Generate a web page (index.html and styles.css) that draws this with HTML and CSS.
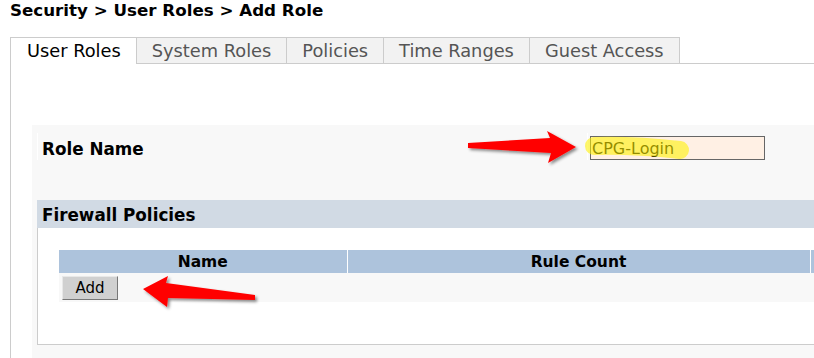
FILE: index.html
```html
<!DOCTYPE html>
<html lang="en">
<head>
    <meta charset="UTF-8">
    <title>Security - Add Role</title>
    <link rel="stylesheet" href="styles.css">
</head>
<body>
    <h1 class="crumb">Security &gt; User Roles &gt; Add Role</h1>

    <div class="tabs">
        <div class="tab active">User Roles</div>
        <div class="tab">System Roles</div>
        <div class="tab">Policies</div>
        <div class="tab">Time Ranges</div>
        <div class="tab">Guest Access</div>
        <div class="tab-fill"></div>
    </div>

    <div class="tab-panel">
        <div class="form">
            <div class="role-row">
                <div class="label-cell">Role Name</div>
                <div class="input-cell">
                    <input type="text" class="role-input" value="CPG-Login">
                </div>
            </div>

            <div class="section">
                <div class="section-head">Firewall Policies</div>
                <div class="section-body">
                    <table class="policies">
                        <thead>
                            <tr>
                                <th class="col-name">Name</th>
                                <th class="col-count">Rule Count</th>
                                <th></th>
                            </tr>
                        </thead>
                        <tbody>
                            <tr>
                                <td colspan="3"><button class="btn-add">Add</button></td>
                            </tr>
                        </tbody>
                    </table>
                </div>
            </div>
        </div>
    </div>

    <!-- annotations drawn over the screenshot -->
    <svg class="marks" width="814" height="358" viewBox="0 0 814 358">
        <defs>
            <filter id="shadow" x="-20%" y="-50%" width="140%" height="200%">
                <feDropShadow dx="2" dy="2" stdDeviation="1.5" flood-color="#000" flood-opacity="0.45"/>
            </filter>
        </defs>
        <path d="M594 146 Q635 145 680 150" stroke="#fff200" stroke-opacity="0.58" stroke-width="18" stroke-linecap="round" fill="none"/>
        <polygon filter="url(#shadow)" fill="#ff0000"
                 points="468,143 550,138 547,131 576,147 548,163 551,153 468,148"/>
        <polygon filter="url(#shadow)" fill="#ff0000"
                 points="143,289 168,276 166,283 255,295 255,300 168,298 167,307"/>
    </svg>
</body>
</html>
```

FILE: styles.css
```css
* {
    margin: 0;
    padding: 0;
    box-sizing: border-box;
}

html, body {
    overflow: hidden;
}

body {
    width: 814px;
    height: 358px;
    background: #fff;
    font-family: "DejaVu Sans", Verdana, sans-serif;
    color: #000;
    position: relative;
}

.crumb {
    font-size: 16.7px;
    font-weight: bold;
    padding: 1px 0 0 10px;
    height: 37px;
    line-height: 19px;
}

.tabs {
    display: flex;
    margin-left: 10px;
    height: 27px;
}

.tab {
    font-size: 17.8px;
    line-height: 25px;
    padding: 0 15px;
    color: #555;
    background: #f2f2f2;
    border: 1px solid #ccc;
    border-left: none;
}

.tab.active {
    color: #000;
    background: #fff;
    border-left: 1px solid #ccc;
    border-bottom: none;
    padding: 0 15px 0 16px;
}

.tab-fill {
    flex: 1;
    border-bottom: 1px solid #ccc;
}

.tab-panel {
    margin-left: 10px;
    border-left: 1px solid #ccc;
    padding: 61px 0 0 21px;
    height: 400px;
}

.form {
    background: #f8f8f8;
    padding-left: 5px;
    height: 300px;
}

.role-row {
    display: flex;
    height: 75px;
    padding-top: 8px;
}

.label-cell {
    width: 550px;
    height: 27px;
    padding-left: 4px;
    border-left: 1px solid #fff;
    font-size: 16.8px;
    font-weight: bold;
    line-height: 32px;
}

.input-cell {
    border-left: 1px solid #fff;
    height: 27px;
    padding: 3px 0 0 2px;
}

.role-input {
    width: 175px;
    height: 24px;
    border: 1px solid #666;
    background: #fff0e4;
    font-family: "DejaVu Sans", Verdana, sans-serif;
    font-size: 16px;
    padding-left: 1px;
    color: #000;
}

.section-head {
    background: #d1dae4;
    height: 28px;
    padding-left: 5px;
    font-size: 16.8px;
    font-weight: bold;
    line-height: 30px;
}

.section-body {
    background: #fff;
    border-left: 1px solid #ccc;
    border-bottom: 1px solid #ccc;
    padding: 22px 0 42px 21px;
}

.policies {
    width: 760px;
    border-collapse: collapse;
    table-layout: fixed;
}

.policies th {
    background: #adc3dc;
    height: 23px;
    font-size: 15.5px;
    font-weight: bold;
    text-align: center;
    border-right: 1px solid #fff;
}

.policies .col-name {
    width: 288px;
}

.policies .col-count {
    width: 463px;
}

.policies td {
    background: #f8f8f8;
    height: 29px;
    padding: 0 0 0 3px;
    vertical-align: middle;
}

.btn-add {
    display: block;
    width: 56px;
    height: 24px;
    background: #d0d0d0;
    border: 1px solid;
    border-color: #e8e8e8 #777 #777 #e8e8e8;
    font-family: "DejaVu Sans", Verdana, sans-serif;
    font-size: 15px;
    color: #000;
}

.marks {
    position: absolute;
    top: 0;
    left: 0;
    pointer-events: none;
}
```
